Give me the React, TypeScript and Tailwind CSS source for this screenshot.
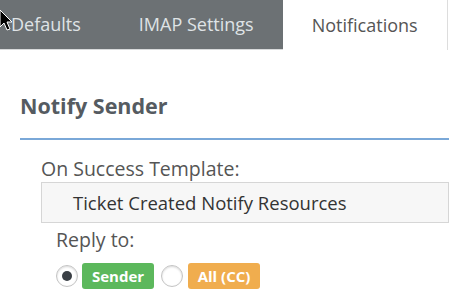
import React from "react";

const Tab: React.FC<{ label: string; active?: boolean; className?: string }> = ({ label, active, className }) => (
  <div
    className={
      active
        ? "flex h-[50px] shrink-0 items-center whitespace-nowrap bg-white px-[29px] text-[#555] border-r border-[#ddd] " + (className || "")
        : "flex h-[50px] shrink-0 items-center whitespace-nowrap px-[29px] text-[#dfe3e6] border-b border-[#d8dadb] " + (className || "")
    }
  >
    {label}
  </div>
);

const Radio: React.FC<{ checked?: boolean }> = ({ checked }) => (
  <span className="flex h-[22px] w-[22px] items-center justify-center rounded-full border-[1.5px] border-[#c4c4c4] bg-white shadow-[inset_0_1px_2px_rgba(0,0,0,0.15)]">
    {checked && <span className="h-[10px] w-[10px] rounded-full bg-[#3a3f45]" />}
  </span>
);

export default function App() {
  return (
    <div className="relative h-[300px] w-[449px] overflow-hidden bg-white font-['Open_Sans',sans-serif]">
      <div className="flex text-[18px]">
        <div className="flex shrink-0 bg-[#6c7174]">
          <Tab label="Defaults" className="-ml-[18px]" />
          <Tab label="IMAP Settings" />
        </div>
        <Tab label="Notifications" active />
      </div>

      <div className="pl-[20px] pt-[41px]">
        <h2 className="pb-[17px] text-[21.5px] font-bold leading-[30px] text-[#555b61] border-b-2 border-[#7aa8d8]">
          Notify Sender
        </h2>
        <div className="pl-[21px] pt-[18px]">
          <div className="text-[19.5px] leading-[22px] text-[#555]">On Success Template:</div>
          <div className="mt-[2px] flex h-[41px] items-center whitespace-nowrap border border-[#d6d6d6] bg-[#f7f7f7] pl-[31px] text-[18.5px] text-[#333]">
            Ticket Created Notify Resources
          </div>
          <div className="pl-[15px]">
            <div className="mt-[6px] text-[19.5px] leading-[22px] text-[#555]">Reply to:</div>
            <div className="mt-[12px] flex items-center">
              <Radio checked />
              <span className="ml-[4px] flex h-[26px] w-[72px] items-center justify-center rounded-[3px] bg-[#5cb85c] text-[15px] font-bold text-white">
                Sender
              </span>
              <span className="ml-[7px]">
                <Radio />
              </span>
              <span className="ml-[5px] flex h-[26px] w-[72px] items-center justify-center rounded-[3px] bg-[#f0ad4e] text-[15px] font-bold text-white">
                All (CC)
              </span>
            </div>
          </div>
        </div>
      </div>

      <svg className="absolute left-0 top-[10px]" width="14" height="22" viewBox="0 0 14 22">
        <path d="M0 0 L0 17 L4 13 L7 20 L10 19 L7 12 L12 12 Z" fill="#000" stroke="#fff" strokeWidth="1" />
      </svg>
    </div>
  );
}
